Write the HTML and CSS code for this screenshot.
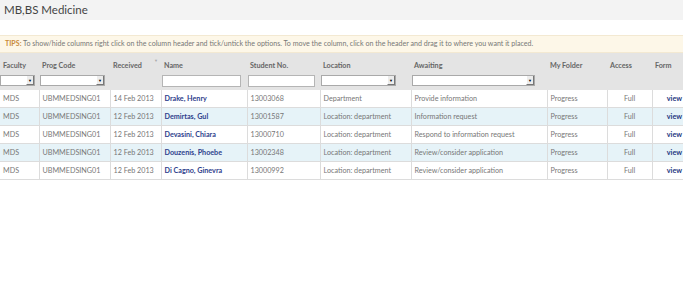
FILE: index.html
```html
<!DOCTYPE html>
<html>
<head>
  <title>MB,BS Medicine</title>
  <meta charset="UTF-8">
  <link rel="stylesheet" href="styles.css">
</head>
<body>
  <div class="page">
    <h1 class="title">MB,BS Medicine</h1>

    <div class="tips"><b>TIPS:</b> To show/hide columns right click on the column header and tick/untick the options. To move the column, click on the header and drag it to where you want it placed.</div>

    <table class="grid">
      <colgroup>
        <col style="width: 39px">
        <col style="width: 71px">
        <col style="width: 51px">
        <col style="width: 86px">
        <col style="width: 73px">
        <col style="width: 91px">
        <col style="width: 136px">
        <col style="width: 60px">
        <col style="width: 45px">
        <col style="width: 31px">
      </colgroup>
      <thead>
        <tr class="labels">
          <th>Faculty</th>
          <th>Prog Code</th>
          <th class="sorted">Received <span class="sort">&#9660;</span></th>
          <th>Name</th>
          <th>Student No.</th>
          <th>Location</th>
          <th>Awaiting</th>
          <th>My Folder</th>
          <th>Access</th>
          <th>Form</th>
        </tr>
        <tr class="filters">
          <th><span class="select w-fac"><span class="arrow">&#9660;</span></span></th>
          <th><span class="select w-prog"><span class="arrow">&#9660;</span></span></th>
          <th></th>
          <th><input class="text w-name" type="text"></th>
          <th><input class="text w-stud" type="text"></th>
          <th><span class="select w-loc"><span class="arrow">&#9660;</span></span></th>
          <th><span class="select w-await"><span class="arrow">&#9660;</span></span></th>
          <th></th>
          <th></th>
          <th></th>
        </tr>
      </thead>
      <tbody>
        <tr>
          <td>MDS</td><td>UBMMEDSING01</td><td>14 Feb 2013</td>
          <td><a class="name" href="#">Drake, Henry</a></td><td>13003068</td>
          <td>Department</td><td>Provide information</td><td>Progress</td>
          <td class="center">Full</td><td class="right"><a class="view" href="#">view</a></td>
        </tr>
        <tr class="alt">
          <td>MDS</td><td>UBMMEDSING01</td><td>12 Feb 2013</td>
          <td><a class="name" href="#">Demirtas, Gul</a></td><td>13001587</td>
          <td>Location: department</td><td>Information request</td><td>Progress</td>
          <td class="center">Full</td><td class="right"><a class="view" href="#">view</a></td>
        </tr>
        <tr>
          <td>MDS</td><td>UBMMEDSING01</td><td>12 Feb 2013</td>
          <td><a class="name" href="#">Devasini, Chiara</a></td><td>13000710</td>
          <td>Location: department</td><td>Respond to information request</td><td>Progress</td>
          <td class="center">Full</td><td class="right"><a class="view" href="#">view</a></td>
        </tr>
        <tr class="alt">
          <td>MDS</td><td>UBMMEDSING01</td><td>12 Feb 2013</td>
          <td><a class="name" href="#">Douzenis, Phoebe</a></td><td>13002348</td>
          <td>Location: department</td><td>Review/consider application</td><td>Progress</td>
          <td class="center">Full</td><td class="right"><a class="view" href="#">view</a></td>
        </tr>
        <tr>
          <td>MDS</td><td>UBMMEDSING01</td><td>12 Feb 2013</td>
          <td><a class="name" href="#">Di Cagno, Ginevra</a></td><td>13000992</td>
          <td>Location: department</td><td>Review/consider application</td><td>Progress</td>
          <td class="center">Full</td><td class="right"><a class="view" href="#">view</a></td>
        </tr>
      </tbody>
    </table>
  </div>
</body>
</html>
```

FILE: styles.css
```css
body {
  margin: 0;
  font-family: "Lato", "Liberation Sans", sans-serif;
  color: #555;
  background: #fff;
}
.page {
  width: 683px;
  overflow: hidden;
}
.title {
  margin: 0;
  height: 20px;
  line-height: 20px;
  padding-left: 4px;
  background-color: #f3f3f3;
  font-size: 11.5px;
  font-weight: normal;
  color: #444;
}
.tips {
  margin-top: 15px;
  height: 16px;
  line-height: 16px;
  padding-left: 5px;
  background-color: #fdf7e8;
  border-top: 1px solid #f3e9d2;
  border-bottom: 1px solid #f3e9d2;
  font-size: 7.1px;
  color: #777;
  white-space: nowrap;
}
.tips b {
  color: #c98a3a;
}
.grid {
  table-layout: fixed;
  width: 683px;
  border-collapse: collapse;
  font-size: 7.2px;
}
.grid thead {
  background-color: #e4e4e4;
}
.grid th {
  text-align: left;
  font-weight: bold;
  color: #666;
  padding: 0 3px;
  white-space: nowrap;
}
.labels th {
  height: 20px;
  padding-top: 2px;
}
.filters th {
  height: 14px;
  padding: 0 0 1px 1px;
  vertical-align: top;
}
.sorted {
  position: relative;
}
.sort {
  position: absolute;
  right: 3px;
  top: 5px;
  font-size: 4px;
  color: #aaa;
}
.select {
  display: flex;
  justify-content: flex-end;
  box-sizing: border-box;
  height: 11px;
  background: #fff;
  border: 1px solid #a9a9a9;
}
.arrow {
  width: 8px;
  height: 9px;
  box-sizing: border-box;
  background: #ececec;
  border-left: 1px solid #fff;
  border-right: 1px solid #777;
  border-bottom: 1px solid #777;
  font-size: 4px;
  line-height: 9px;
  text-align: center;
  color: #000;
}
.text {
  display: block;
  box-sizing: border-box;
  height: 12px;
  margin: 0;
  padding: 0;
  background: #fff;
  border: 1px solid #b5b5b5;
}
.w-fac { width: 35px; margin-left: -1px; }
.w-prog { width: 65px; }
.w-name { width: 79px; }
.w-stud { width: 67px; }
.w-loc { width: 75px; }
.w-await { width: 123px; }
.grid td {
  height: 17px;
  padding: 0 3px;
  border: 1px solid #dcdcdc;
  color: #777;
  white-space: nowrap;
  overflow: hidden;
}
.grid tbody tr:first-child td {
  border-top: none;
}
.grid td:first-child {
  border-left: none;
}
.grid td:last-child {
  border-right: none;
  padding-right: 1px;
}
.alt td {
  background-color: #e6f3f8;
}
.center {
  text-align: center;
}
.right {
  text-align: right;
}
.name {
  color: #2e418c;
  font-weight: bold;
  text-decoration: none;
}
.view {
  color: #24367e;
  font-weight: bold;
  text-decoration: none;
}
```
